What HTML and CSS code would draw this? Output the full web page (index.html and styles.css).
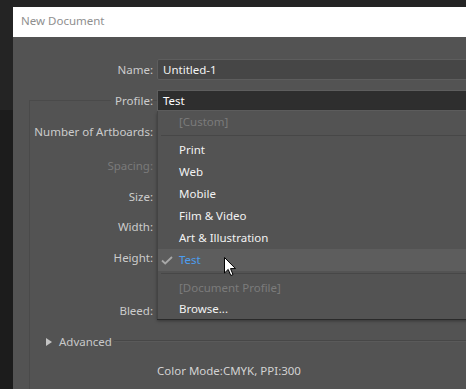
FILE: index.html
```html
<!DOCTYPE html>
<html>
<head>
<meta charset="utf-8">
<link rel="stylesheet" href="styles.css">
</head>
<body>
<div class="screen">
  <div class="dialog">
    <div class="titlebar">New Document</div>
    <div class="body">
      <div class="row">
        <span class="label">Name:</span>
        <div class="field input">Untitled-1</div>
      </div>
      <div class="group">
        <div class="row row-profile">
          <span class="label"><span class="legend">Profile:</span></span>
          <div class="field select">Test
            <div class="menu">
              <div class="item disabled">[Custom]</div>
              <div class="sep"></div>
              <div class="item">Print</div>
              <div class="item">Web</div>
              <div class="item">Mobile</div>
              <div class="item">Film &amp; Video</div>
              <div class="item">Art &amp; Illustration</div>
              <div class="item active">
                <svg class="check" width="12" height="9" viewBox="0 0 12 9"><path d="M1 4.5 L4.2 7.5 L11 1" fill="none" stroke="#a8a8a8" stroke-width="1.8"/></svg>
                Test
              </div>
              <div class="sep"></div>
              <div class="item disabled">[Document Profile]</div>
              <div class="item last">Browse...</div>
            </div>
          </div>
        </div>
        <div class="row gap-10"><span class="label label-g">Number of Artboards:</span></div>
        <div class="row gap-13"><span class="label label-g dim">Spacing:</span></div>
        <div class="row gap-10"><span class="label label-g">Size:</span></div>
        <div class="row gap-9"><span class="label label-g">Width:</span></div>
        <div class="row gap-10"><span class="label label-g">Height:</span></div>
        <div class="row gap-32"><span class="label label-g">Bleed:</span></div>
        <div class="row gap-10 advanced">
          <span class="tri"></span>
          <span class="adv-text">Advanced</span>
          <span class="rule"></span>
        </div>
        <div class="row gap-8 info">Color Mode:CMYK, PPI:300</div>
      </div>
    </div>
  </div>
  <svg class="cursor" width="13" height="20" viewBox="0 0 13 20"><path d="M0.5 0.5 L0.5 16 L4.2 12.4 L6.8 18.5 L9 17.6 L6.5 11.6 L11.5 11.6 Z" fill="#fff" stroke="#000" stroke-width="1" stroke-linejoin="round"/></svg>
</div>
</body>
</html>
```

FILE: styles.css
```css
html, body {
  margin: 0;
  height: 100%;
}
body {
  overflow: hidden;
  background: #1d1d1d;
  font-family: "Noto Sans", "Open Sans", sans-serif;
  font-size: 11.5px;
  white-space: nowrap;
}
.screen {
  position: relative;
  height: 389px;
  box-sizing: border-box;
  padding: 7px 0 0 13px;
  background: linear-gradient(#242424 0, #242424 110px, #1c1c1c 110px);
}
.dialog {
  width: 520px;
  height: 382px;
  background: #535353;
  display: flex;
  flex-direction: column;
}
.titlebar {
  height: 30px;
  line-height: 27px;
  background: #ffffff;
  color: #8f8f8f;
  padding-left: 8px;
  box-sizing: border-box;
}
.body {
  flex: 1;
  padding-top: 22px;
  display: flex;
  flex-direction: column;
}
.row {
  display: flex;
  height: 21px;
  line-height: 21px;
  flex: none;
}
.label {
  width: 140px;
  flex: none;
  text-align: right;
  color: #cccccc;
}
.label-g {
  width: 123px;
}
.dim {
  color: #7a7a7a;
}
.field {
  flex: 1;
  margin-left: 4px;
  box-sizing: border-box;
  padding-left: 5px;
  color: #f4f4f4;
}
.input {
  background: #464646;
  border: 1px solid #5d5d5d;
  border-radius: 2px;
  line-height: 19px;
}
.group {
  flex: 1;
  margin: 20px 0 0 16px;
  border: 1px solid #4a4a4a;
  border-right: none;
  border-bottom: none;
  display: flex;
  flex-direction: column;
}
.row-profile {
  margin-top: -11px;
}
.row-profile .label {
  width: 123px;
}
.legend {
  background: #535353;
  padding-left: 4px;
}
.select {
  position: relative;
  background: #2e2e2e;
  border: 1px solid #5e5e5e;
  line-height: 19px;
  color: #ffffff;
}
.menu {
  position: absolute;
  top: calc(100% + 1px);
  left: -1px;
  right: -1px;
  background: #535353;
  border-left: 1px solid #444444;
  box-shadow: 0 1px 0 #2a2a2a, 0 2px 3px rgba(0, 0, 0, 0.35);
  z-index: 2;
}
.item {
  position: relative;
  height: 22px;
  line-height: 22px;
  padding-left: 21px;
  color: #f2f2f2;
}
.item.disabled {
  color: #7b7b7b;
}
.item.active {
  background: #5d5d5d;
  color: #4c9df0;
}
.item.last {
  height: 20px;
  line-height: 20px;
}
.check {
  position: absolute;
  left: 3px;
  top: 7px;
}
.sep {
  height: 1px;
  margin: 2px 0 3px 3px;
  background: #474747;
}
.gap-8 { margin-top: 8px; }
.gap-9 { margin-top: 9px; }
.gap-10 { margin-top: 10px; }
.gap-13 { margin-top: 13px; }
.gap-32 { margin-top: 32px; }
.advanced {
  align-items: center;
  padding-left: 16px;
}
.tri {
  width: 0;
  height: 0;
  border-left: 6px solid #c4c4c4;
  border-top: 4.5px solid transparent;
  border-bottom: 4.5px solid transparent;
}
.adv-text {
  margin-left: 7px;
  color: #c8c8c8;
}
.rule {
  flex: 1;
  margin: -1px 0 0 2px;
  border-top: 1px solid #474747;
  border-bottom: 1px solid #5a5a5a;
}
.info {
  padding-left: 127px;
  color: #d2d2d2;
}
.cursor {
  position: absolute;
  left: 224px;
  top: 257px;
  z-index: 3;
}
```
